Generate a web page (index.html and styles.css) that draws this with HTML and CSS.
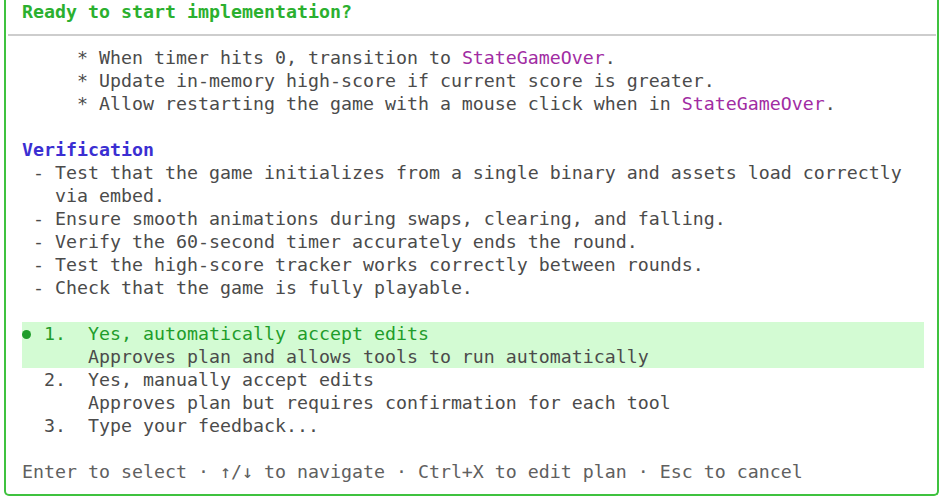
FILE: index.html
```html
<!DOCTYPE html>
<html lang="en">
<head>
<meta charset="utf-8">
<title>Plan</title>
<link rel="stylesheet" href="styles.css">
</head>
<body>
<div class="box">
  <div class="line title">Ready to start implementation?</div>
  <div class="sep-row"><div class="sep"></div></div>
  <div class="line">     * When timer hits 0, transition to <span class="type">StateGameOver</span>.</div>
  <div class="line">     * Update in-memory high-score if current score is greater.</div>
  <div class="line">     * Allow restarting the game with a mouse click when in <span class="type">StateGameOver</span>.</div>
  <div class="line"> </div>
  <div class="line heading">Verification</div>
  <div class="line"> - Test that the game initializes from a single binary and assets load correctly</div>
  <div class="line">   via embed.</div>
  <div class="line"> - Ensure smooth animations during swaps, clearing, and falling.</div>
  <div class="line"> - Verify the 60-second timer accurately ends the round.</div>
  <div class="line"> - Test the high-score tracker works correctly between rounds.</div>
  <div class="line"> - Check that the game is fully playable.</div>
  <div class="line"> </div>
  <div class="option selected">
    <div class="line"><span class="dot"></span> 1.  Yes, automatically accept edits</div>
    <div class="line desc">      Approves plan and allows tools to run automatically</div>
  </div>
  <div class="option">
    <div class="line">  2.  Yes, manually accept edits</div>
    <div class="line">      Approves plan but requires confirmation for each tool</div>
  </div>
  <div class="option">
    <div class="line">  3.  Type your feedback...</div>
  </div>
  <div class="line"> </div>
  <div class="line footer">Enter to select · ↑/↓ to navigate · Ctrl+X to edit plan · Esc to cancel</div>
</div>
</body>
</html>
```
FILE: styles.css
```css
html, body {
  margin: 0;
  padding: 0;
  background: #ffffff;
}

body {
  width: 944px;
  height: 501px;
  overflow: hidden;
}

.box {
  margin: 0 5px 0 4px;
  border-left: 2px solid #3fc23f;
  border-right: 2px solid #3fc23f;
  border-bottom: 2px solid #3fc23f;
  border-radius: 0 0 5px 5px;
  padding: 0 0 11px 0;
  font-family: "DejaVu Sans Mono", "Liberation Mono", monospace;
  font-size: 18.27px;
  color: #4b4b4b;
}

.line {
  height: 23px;
  line-height: 23px;
  white-space: pre;
  padding-left: 16px;
}

.option .line {
  padding-left: 0;
}

.option {
  margin-left: 16px;
  margin-right: 13px;
}

.title {
  color: #2bb02f;
  font-weight: bold;
}

.heading {
  color: #3b2fd2;
  font-weight: bold;
}

.type {
  color: #a12ca3;
}

.sep-row {
  height: 23px;
  display: flex;
  align-items: center;
  padding: 0 1px 0 2px;
}

.sep {
  flex: 1;
  height: 2px;
  background: #cdcdcd;
}

.selected {
  background: #d3fbd3;
}

.selected .line {
  color: #1f9d2b;
}

.selected .desc {
  color: #4b4b4b;
}

.dot {
  display: inline-block;
  width: 9px;
  height: 9px;
  margin-right: 2px;
  border-radius: 50%;
  background: #1f9d2b;
  vertical-align: 1px;
}

.footer {
  color: #606060;
}
```
